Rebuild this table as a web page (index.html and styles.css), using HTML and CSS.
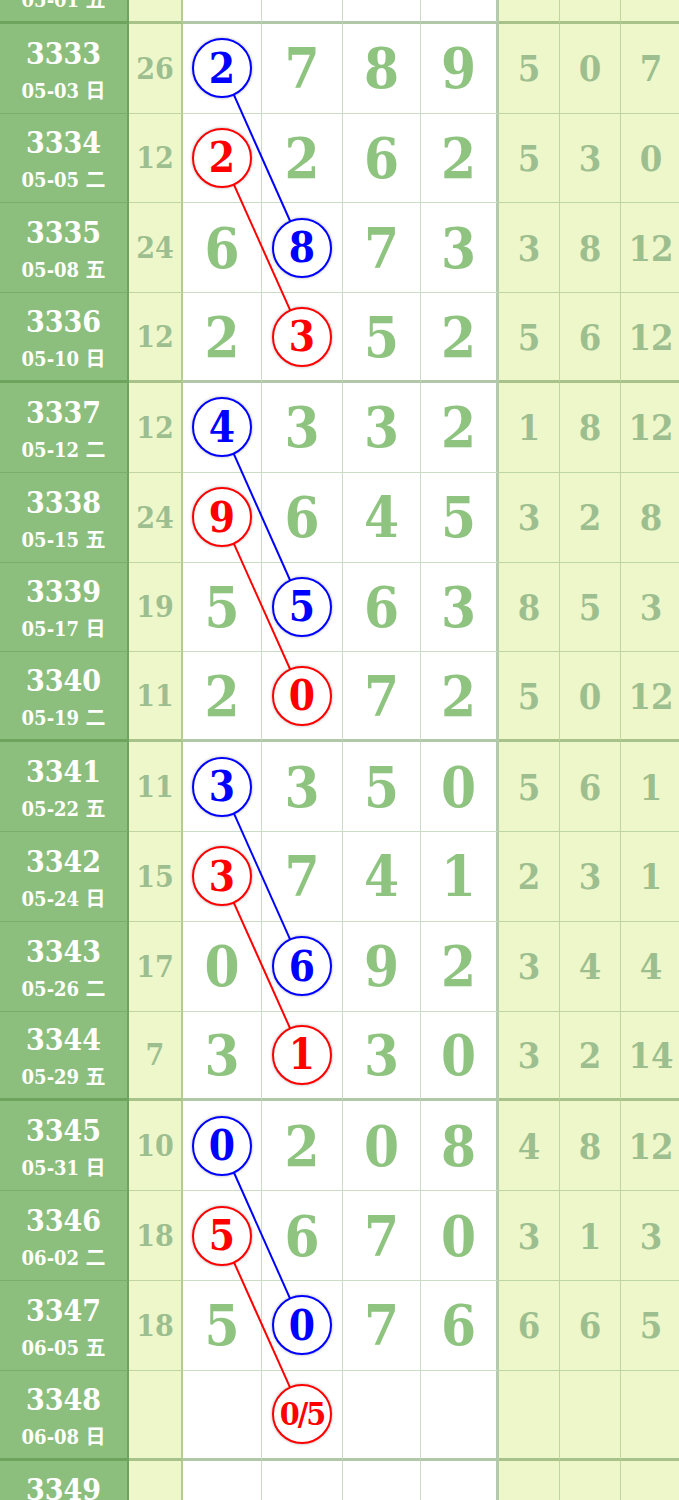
FILE: index.html
```html
<!DOCTYPE html>
<html lang="zh">
<head>
  <meta charset="UTF-8">
  <title>走势图</title>
  <link rel="stylesheet" href="styles.css">
</head>
<body>
  <div class="chart" id="chart">
    <svg class="links" id="links"></svg>
  </div>

  <script>
    // [期号, 日期, 和值, 开奖号, 尾数, 圈号位置, 颜色]
    const rows = [
      ["3332", "05-01 五", "", ["", "", "", ""], ["", "", ""]],
      ["3333", "05-03 日", "26", ["2", "7", "8", "9"], ["5", "0", "7"], 0, "b"],
      ["3334", "05-05 二", "12", ["2", "2", "6", "2"], ["5", "3", "0"], 0, "r"],
      ["3335", "05-08 五", "24", ["6", "8", "7", "3"], ["3", "8", "12"], 1, "b"],
      ["3336", "05-10 日", "12", ["2", "3", "5", "2"], ["5", "6", "12"], 1, "r"],
      ["3337", "05-12 二", "12", ["4", "3", "3", "2"], ["1", "8", "12"], 0, "b"],
      ["3338", "05-15 五", "24", ["9", "6", "4", "5"], ["3", "2", "8"], 0, "r"],
      ["3339", "05-17 日", "19", ["5", "5", "6", "3"], ["8", "5", "3"], 1, "b"],
      ["3340", "05-19 二", "11", ["2", "0", "7", "2"], ["5", "0", "12"], 1, "r"],
      ["3341", "05-22 五", "11", ["3", "3", "5", "0"], ["5", "6", "1"], 0, "b"],
      ["3342", "05-24 日", "15", ["3", "7", "4", "1"], ["2", "3", "1"], 0, "r"],
      ["3343", "05-26 二", "17", ["0", "6", "9", "2"], ["3", "4", "4"], 1, "b"],
      ["3344", "05-29 五", "7", ["3", "1", "3", "0"], ["3", "2", "14"], 1, "r"],
      ["3345", "05-31 日", "10", ["0", "2", "0", "8"], ["4", "8", "12"], 0, "b"],
      ["3346", "06-02 二", "18", ["5", "6", "7", "0"], ["3", "1", "3"], 0, "r"],
      ["3347", "06-05 五", "18", ["5", "0", "7", "6"], ["6", "6", "5"], 1, "b"],
      ["3348", "06-08 日", "", ["", "0/5", "", ""], ["", "", ""], 1, "r"],
      ["3349", "06-10 二", "", ["", "", "", ""], ["", "", ""]]
    ];

    const chart = document.getElementById("chart");

    rows.forEach((r, i) => {
      const row = document.createElement("div");
      row.className = "row" + (parseInt(r[0]) % 4 === 0 ? " group-end" : "");

      let html = `<div class="issue"><span class="no">${r[0]}</span><span class="date">${r[1]}</span></div>`;
      html += `<div class="sum">${r[2]}</div>`;
      r[3].forEach((n, k) => {
        if (r[5] === k) {
          const small = n.length > 1 ? " small" : "";
          html += `<div class="num"><span class="ball ${r[6]}${small}" data-i="${i}">${n}</span></div>`;
        } else {
          html += `<div class="num">${n}</div>`;
        }
      });
      r[4].forEach(t => {
        html += `<div class="tail">${t}</div>`;
      });
      row.innerHTML = html;
      chart.appendChild(row);
    });

    // 连线：第一列的圈连到隔一行的同色圈
    const svg = document.getElementById("links");
    const box = chart.getBoundingClientRect();
    const center = el => {
      const b = el.getBoundingClientRect();
      return [b.left + b.width / 2 - box.left, b.top + b.height / 2 - box.top];
    };
    let lines = "";
    rows.forEach((r, i) => {
      if (r[5] !== 0) return;
      const next = rows[i + 2];
      if (!next || next[6] !== r[6]) return;
      const a = document.querySelector(`.ball[data-i="${i}"]`);
      const b = document.querySelector(`.ball[data-i="${i + 2}"]`);
      const [x1, y1] = center(a);
      const [x2, y2] = center(b);
      const color = r[6] === "b" ? "#0000ff" : "#ff0000";
      lines += `<line x1="${x1}" y1="${y1}" x2="${x2}" y2="${y2}" stroke="${color}" stroke-width="2"/>`;
    });
    svg.innerHTML = lines;
  </script>
</body>
</html>
```

FILE: styles.css
```css
body {
  margin: 0;
  padding: 0;
  background: #fff;
  overflow: hidden;
  font-family: "DejaVu Serif", "Noto Sans CJK SC", serif;
  font-stretch: condensed;
  font-weight: bold;
}

.chart {
  position: relative;
  width: 682px;
  margin-top: -66px;
}

.links {
  position: absolute;
  left: 0;
  top: 0;
  width: 100%;
  height: 100%;
  z-index: 1;
  pointer-events: none;
}

.row {
  display: grid;
  grid-template-columns: 129px 54px 79px 81px 78px 78px 61px 61px 61px;
  height: 89.8px;
}

.row > div {
  box-sizing: border-box;
  display: flex;
  align-items: center;
  justify-content: center;
  border-bottom: 1px solid rgba(70, 130, 50, 0.28);
  border-right: 1px solid rgba(70, 130, 50, 0.28);
}

.row.group-end > div {
  border-bottom: 3px solid rgba(70, 125, 50, 0.42);
}

.issue {
  flex-direction: column;
  padding-top: 4px;
  background: #8cbf7d;
  color: #fff;
  border-right: 2px solid rgba(60, 110, 45, 0.35) !important;
}

.issue .no {
  font-size: 30px;
  line-height: 32px;
}

.issue .date {
  font-size: 20px;
  line-height: 24px;
  margin-top: 9px;
}

.sum {
  background: #eef7ca;
  color: #9dbf8f;
  font-size: 30px;
  border-right: 2px solid rgba(70, 125, 50, 0.35) !important;
}

.num {
  background: #fff;
  color: #8ec47f;
  font-size: 56px;
}

.num:nth-child(6) {
  border-right: 3px solid rgba(70, 125, 50, 0.4) !important;
}

.tail {
  background: #eef7ca;
  color: #9dbf8f;
  font-size: 36px;
}

.ball {
  position: relative;
  z-index: 2;
  box-sizing: border-box;
  width: 60px;
  height: 60px;
  border-radius: 50%;
  border: 2.5px solid;
  background: #fff;
  display: flex;
  align-items: center;
  justify-content: center;
  font-size: 42px;
  box-shadow: 0 0 3px rgba(0, 0, 0, 0.35);
}

.ball.b {
  color: #0000ff;
  border-color: #0000ff;
}

.ball.r {
  color: #ff0000;
  border-color: #ff0000;
}

.ball.small {
  font-size: 32px;
  letter-spacing: -2px;
}
```
